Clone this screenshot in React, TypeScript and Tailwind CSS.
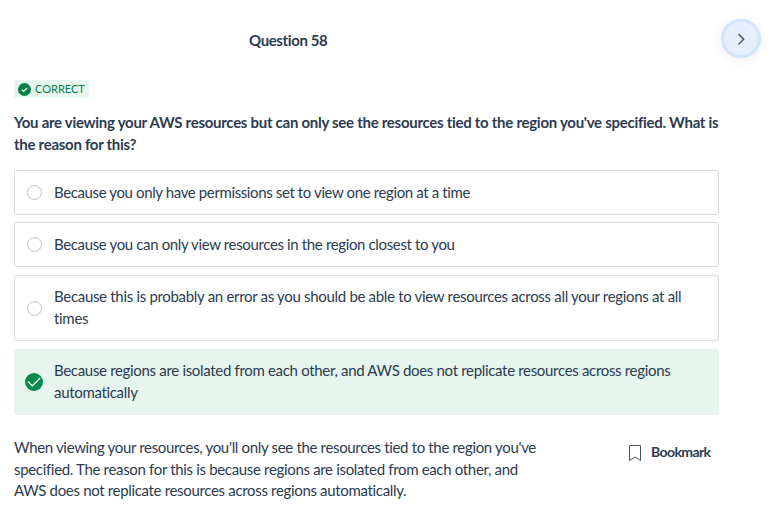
const answers = [
  { text: "Because you only have permissions set to view one region at a time", size: "h-[45px]", tracking: "tracking-[-0.38px]" },
  { text: "Because you can only view resources in the region closest to you", size: "mt-[7px] h-[45px]", tracking: "tracking-[-0.36px]" },
  { text: "Because this is probably an error as you should be able to view resources across all your regions at all times", size: "mt-2 h-[66px]", tracking: "tracking-[-0.31px]" },
  { text: "Because regions are isolated from each other, and AWS does not replicate resources across regions automatically", size: "mt-2 h-[66px]", tracking: "tracking-[-0.32px]", correct: true },
];

function Badge() {
  return (
    <svg viewBox="0 0 13 13" className="size-[13px]">
      <circle cx="6.5" cy="6.5" r="6.5" fill="#087f47" />
      <path d="m3.8 6.7 1.8 1.7 3.5-3.6" fill="none" stroke="white" strokeWidth="1.2" />
    </svg>
  );
}

function SelectedMark() {
  return (
    <svg viewBox="0 0 18 18" className="-ml-[2px] size-[18px] shrink-0">
      <circle cx="9" cy="9" r="9" fill="#088a4d" />
      <path d="m2.8 8.4 4.5 4.6 7.8-8" fill="none" stroke="white" strokeWidth="1.2" />
    </svg>
  );
}

export default function App() {
  return (
    <main className="h-[514px] w-[773px] overflow-hidden bg-white pl-[14px] font-['Lato',sans-serif] text-[15px] leading-[22px] tracking-[-0.38px] text-[#2d3b50]">
      <header className="flex h-[80px] items-start justify-between pr-[12px] pt-[19px]">
        <h1 className="ml-[235px] mt-[10px] text-[15px] font-bold">Question 58</h1>
        <button className="flex h-[39px] w-[40px] items-center justify-center rounded-full border-[3px] border-[#d2e3fc] bg-[#e6effe] shadow-[0_2px_12px_rgba(0,0,0,0.07)]">
          <svg viewBox="0 0 12 12" className="size-3" fill="none" stroke="#3b4859" strokeWidth="1.3"><path d="m3.5 1 5.2 5.2-5.2 5.2" /></svg>
        </button>
      </header>
      <div className="flex h-[18px] w-[75px] items-center gap-1 rounded-[3px] bg-[#e6f5ee] pl-1 text-[11px] tracking-normal text-[#087f47]">
        <Badge />CORRECT
      </div>
      <h2 className="mt-[13px] w-[710px] font-bold tracking-[-0.28px]">You are viewing your AWS resources but can only see the resources tied to the region you've specified. What is the reason for this?</h2>
      <div className="mt-[15px] flex w-[705px] flex-col">
        {answers.map((a) => (
          <div key={a.text} className={`flex items-center rounded-[3px] border pl-[12px] pr-6 ${a.size} ${a.correct ? "border-[#e6f5ee] bg-[#e6f5ee]" : "border-[#d9d9e0]"}`}>
            <span className="flex w-[27px] shrink-0">
              {a.correct ? <SelectedMark /> : <span className="size-[15px] rounded-full border border-[#bfc2c9]" />}
            </span>
            <p className={`-mt-[2px] ${a.tracking}`}>{a.text}</p>
          </div>
        ))}
      </div>
      <footer className="mt-[22px] flex">
        <p className="w-[527px] leading-[21.6px] tracking-[-0.33px]">When viewing your resources, you'll only see the resources tied to the region you've specified. The reason for this is because regions are isolated from each other, and AWS does not replicate resources across regions automatically.</p>
        <button className="ml-[88px] mt-[5px] flex h-[22px] items-center gap-[10px] text-[14px] font-bold tracking-[-0.6px]">
          <svg viewBox="0 0 12 16" className="h-4 w-3" fill="none" stroke="#46546a"><path d="M.5.5h11v15L6 12 .5 15.5Z" /></svg>
          <span className="-mt-[2px]">Bookmark</span>
        </button>
      </footer>
    </main>
  );
}
